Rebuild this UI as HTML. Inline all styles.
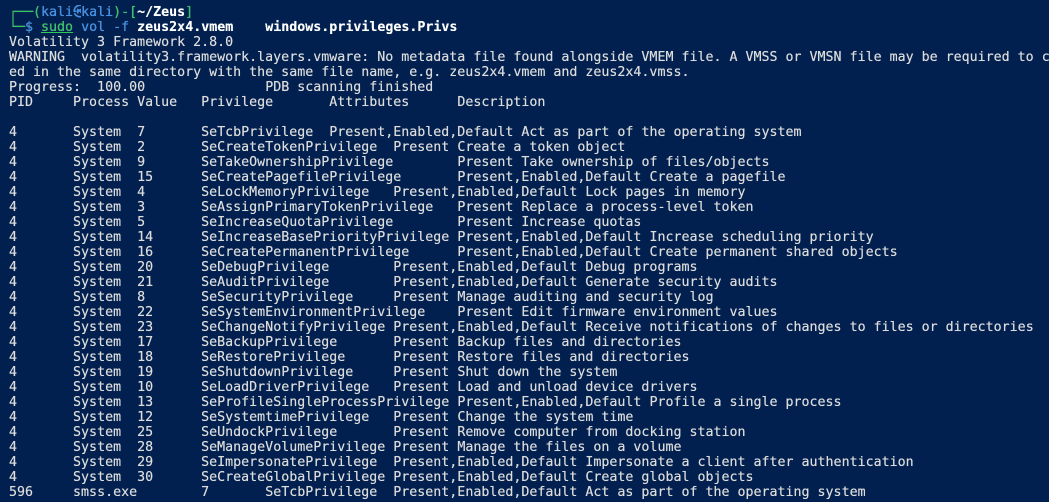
<!DOCTYPE html>
<html><head><meta charset="utf-8"><style>
html,body{margin:0;padding:0;background:#01204f;width:1049px;height:502px;overflow:hidden}
pre{margin:0;padding:5px 0 0 9px;font-family:"DejaVu Sans Mono","Liberation Mono",monospace;font-size:13.3px;line-height:15px;color:#dcdcdc;text-shadow:0 0 0.4px #dcdcdc;tab-size:8;-moz-tab-size:8;white-space:pre}
.g{color:#2ec95c}.b{color:#3b8eea}.w{color:#fff;font-weight:bold}.u{text-decoration:underline}
.k{display:inline-block;width:8px;overflow:hidden;vertical-align:top}
</style></head><body><pre><span class="g">┌──(</span><span class="b">kali<span class="k">㉿</span>kali</span><span class="g">)-[</span><span class="w">~/Zeus</span><span class="g">]</span>
<span class="g">└─</span><span class="b">$ </span><span class="g u">sudo</span> <span class="b">vol</span> <span class="b">-f</span> <span class="w">zeus2x4.vmem</span>    <span class="w">windows.privileges.Privs</span>
Volatility 3 Framework 2.8.0
WARNING  volatility3.framework.layers.vmware: No metadata file found alongside VMEM file. A VMSS or VMSN file may be required to c
ed in the same directory with the same file name, e.g. zeus2x4.vmem and zeus2x4.vmss.
Progress:  100.00		PDB scanning finished
PID	Process	Value	Privilege	Attributes	Description

4	System	7	SeTcbPrivilege	Present,Enabled,Default	Act as part of the operating system
4	System	2	SeCreateTokenPrivilege	Present	Create a token object
4	System	9	SeTakeOwnershipPrivilege	Present	Take ownership of files/objects
4	System	15	SeCreatePagefilePrivilege	Present,Enabled,Default	Create a pagefile
4	System	4	SeLockMemoryPrivilege	Present,Enabled,Default	Lock pages in memory
4	System	3	SeAssignPrimaryTokenPrivilege	Present	Replace a process-level token
4	System	5	SeIncreaseQuotaPrivilege	Present	Increase quotas
4	System	14	SeIncreaseBasePriorityPrivilege	Present,Enabled,Default	Increase scheduling priority
4	System	16	SeCreatePermanentPrivilege	Present,Enabled,Default	Create permanent shared objects
4	System	20	SeDebugPrivilege	Present,Enabled,Default	Debug programs
4	System	21	SeAuditPrivilege	Present,Enabled,Default	Generate security audits
4	System	8	SeSecurityPrivilege	Present	Manage auditing and security log
4	System	22	SeSystemEnvironmentPrivilege	Present	Edit firmware environment values
4	System	23	SeChangeNotifyPrivilege	Present,Enabled,Default	Receive notifications of changes to files or directories
4	System	17	SeBackupPrivilege	Present	Backup files and directories
4	System	18	SeRestorePrivilege	Present	Restore files and directories
4	System	19	SeShutdownPrivilege	Present	Shut down the system
4	System	10	SeLoadDriverPrivilege	Present	Load and unload device drivers
4	System	13	SeProfileSingleProcessPrivilege	Present,Enabled,Default	Profile a single process
4	System	12	SeSystemtimePrivilege	Present	Change the system time
4	System	25	SeUndockPrivilege	Present	Remove computer from docking station
4	System	28	SeManageVolumePrivilege	Present	Manage the files on a volume
4	System	29	SeImpersonatePrivilege	Present,Enabled,Default	Impersonate a client after authentication
4	System	30	SeCreateGlobalPrivilege	Present,Enabled,Default	Create global objects
596	smss.exe	7	SeTcbPrivilege	Present,Enabled,Default	Act as part of the operating system</pre></body></html>
